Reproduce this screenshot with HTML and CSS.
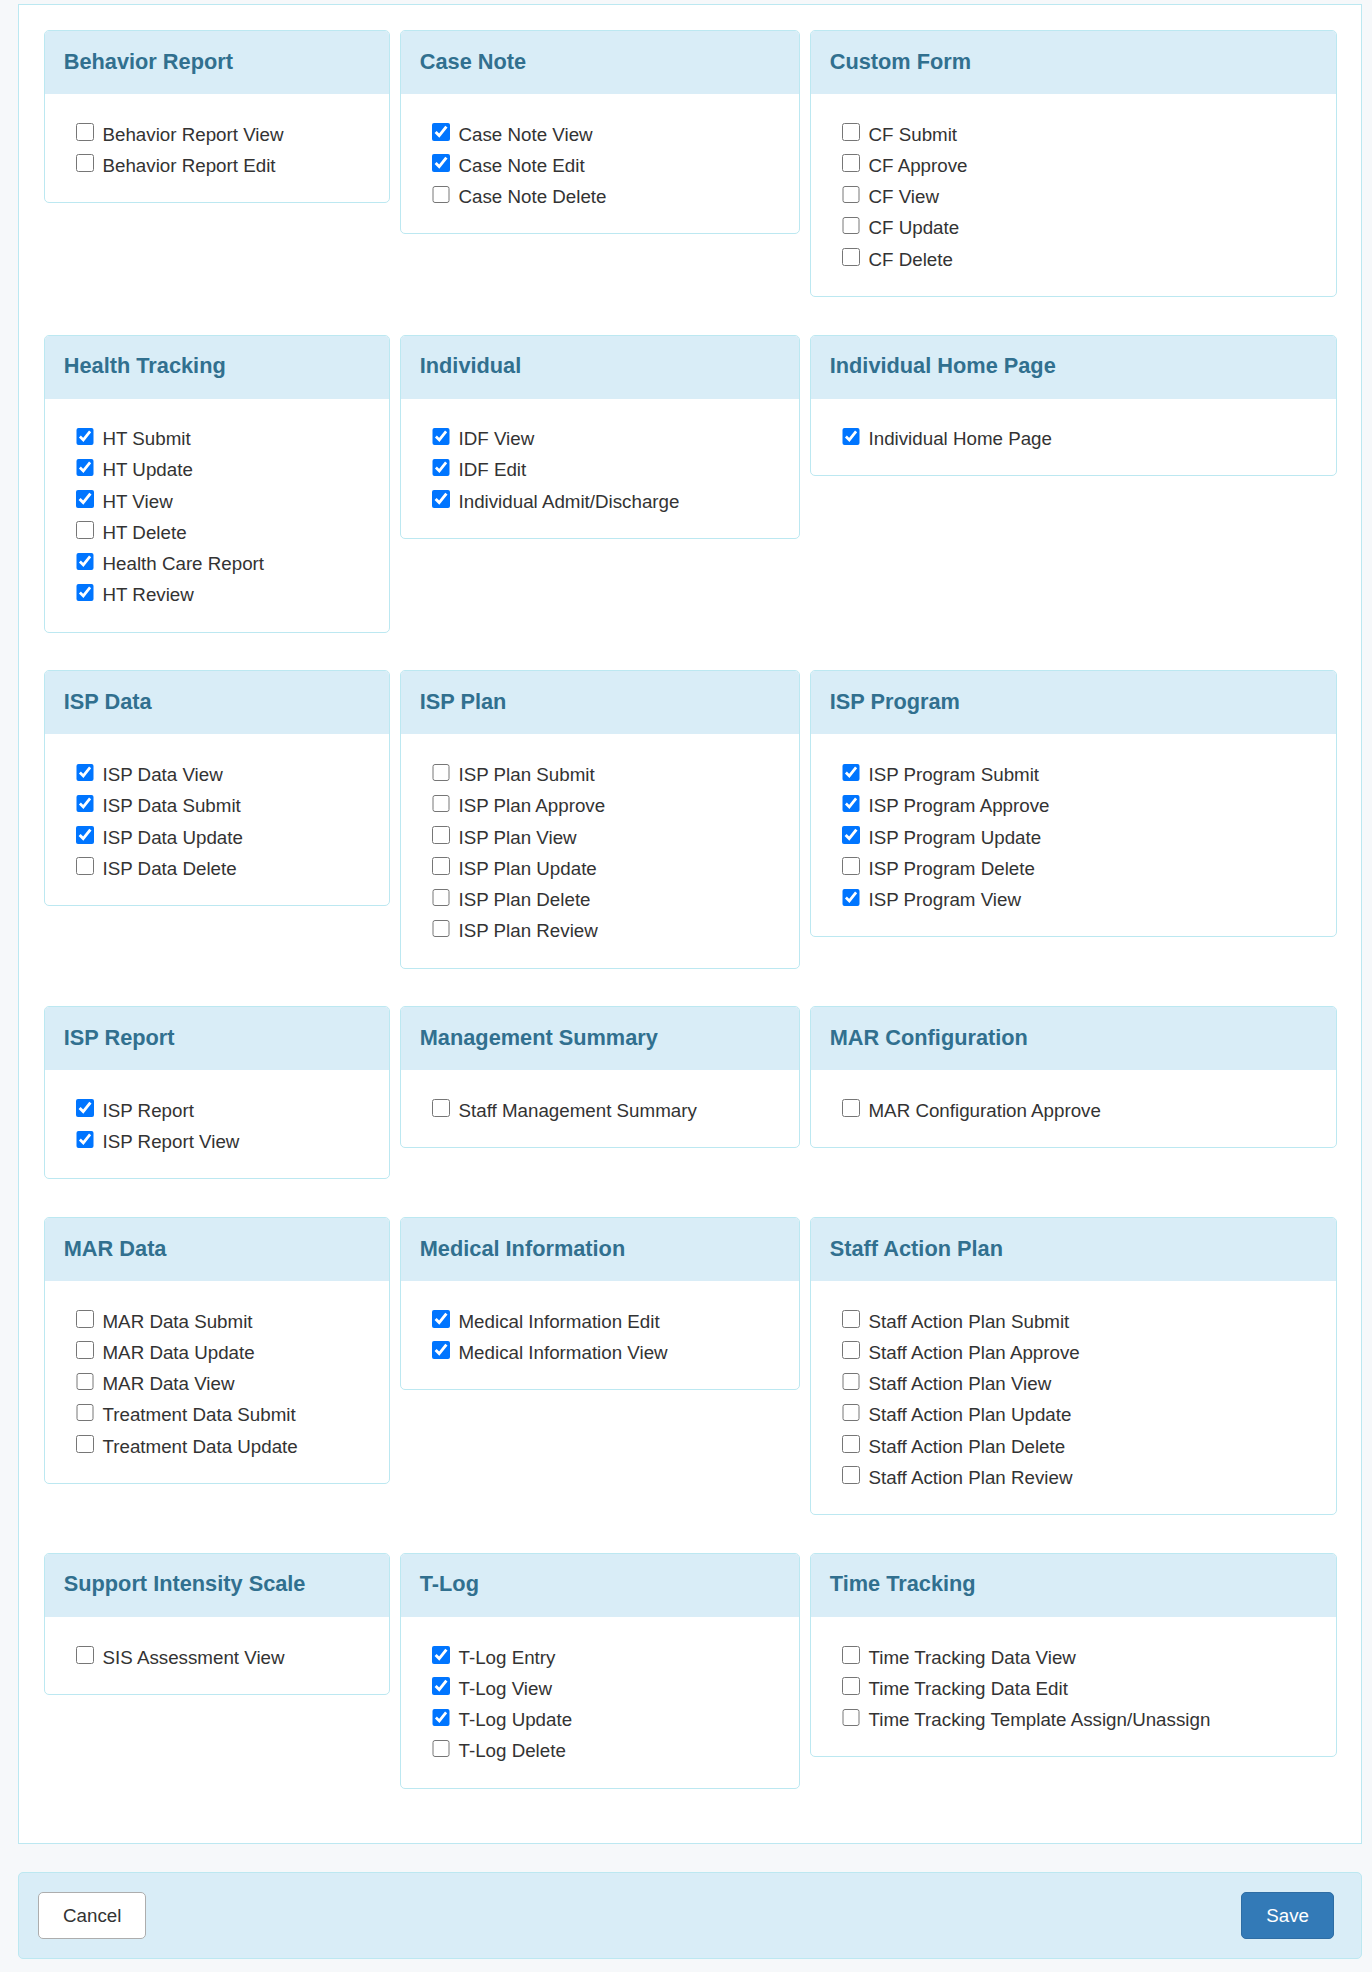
FILE: index.html
```html
<!DOCTYPE html>
<html lang="en">
<head>
<meta charset="utf-8">
<title>Permissions</title>
<link rel="stylesheet" href="styles.css">
</head>
<body>
<div class="page">
  <div class="perm-box">
    <div class="perm-grid">

      <section class="card">
        <header class="card-head"><h3>Behavior Report</h3></header>
        <div class="card-body">
          <label class="item"><input type="checkbox"><span>Behavior Report View</span></label>
          <label class="item"><input type="checkbox"><span>Behavior Report Edit</span></label>
        </div>
      </section>

      <section class="card">
        <header class="card-head"><h3>Case Note</h3></header>
        <div class="card-body">
          <label class="item"><input type="checkbox" checked><span>Case Note View</span></label>
          <label class="item"><input type="checkbox" checked><span>Case Note Edit</span></label>
          <label class="item"><input type="checkbox"><span>Case Note Delete</span></label>
        </div>
      </section>

      <section class="card">
        <header class="card-head"><h3>Custom Form</h3></header>
        <div class="card-body">
          <label class="item"><input type="checkbox"><span>CF Submit</span></label>
          <label class="item"><input type="checkbox"><span>CF Approve</span></label>
          <label class="item"><input type="checkbox"><span>CF View</span></label>
          <label class="item"><input type="checkbox"><span>CF Update</span></label>
          <label class="item"><input type="checkbox"><span>CF Delete</span></label>
        </div>
      </section>

      <section class="card">
        <header class="card-head"><h3>Health Tracking</h3></header>
        <div class="card-body">
          <label class="item"><input type="checkbox" checked><span>HT Submit</span></label>
          <label class="item"><input type="checkbox" checked><span>HT Update</span></label>
          <label class="item"><input type="checkbox" checked><span>HT View</span></label>
          <label class="item"><input type="checkbox"><span>HT Delete</span></label>
          <label class="item"><input type="checkbox" checked><span>Health Care Report</span></label>
          <label class="item"><input type="checkbox" checked><span>HT Review</span></label>
        </div>
      </section>

      <section class="card">
        <header class="card-head"><h3>Individual</h3></header>
        <div class="card-body">
          <label class="item"><input type="checkbox" checked><span>IDF View</span></label>
          <label class="item"><input type="checkbox" checked><span>IDF Edit</span></label>
          <label class="item"><input type="checkbox" checked><span>Individual Admit/Discharge</span></label>
        </div>
      </section>

      <section class="card">
        <header class="card-head"><h3>Individual Home Page</h3></header>
        <div class="card-body">
          <label class="item"><input type="checkbox" checked><span>Individual Home Page</span></label>
        </div>
      </section>

      <section class="card">
        <header class="card-head"><h3>ISP Data</h3></header>
        <div class="card-body">
          <label class="item"><input type="checkbox" checked><span>ISP Data View</span></label>
          <label class="item"><input type="checkbox" checked><span>ISP Data Submit</span></label>
          <label class="item"><input type="checkbox" checked><span>ISP Data Update</span></label>
          <label class="item"><input type="checkbox"><span>ISP Data Delete</span></label>
        </div>
      </section>

      <section class="card">
        <header class="card-head"><h3>ISP Plan</h3></header>
        <div class="card-body">
          <label class="item"><input type="checkbox"><span>ISP Plan Submit</span></label>
          <label class="item"><input type="checkbox"><span>ISP Plan Approve</span></label>
          <label class="item"><input type="checkbox"><span>ISP Plan View</span></label>
          <label class="item"><input type="checkbox"><span>ISP Plan Update</span></label>
          <label class="item"><input type="checkbox"><span>ISP Plan Delete</span></label>
          <label class="item"><input type="checkbox"><span>ISP Plan Review</span></label>
        </div>
      </section>

      <section class="card">
        <header class="card-head"><h3>ISP Program</h3></header>
        <div class="card-body">
          <label class="item"><input type="checkbox" checked><span>ISP Program Submit</span></label>
          <label class="item"><input type="checkbox" checked><span>ISP Program Approve</span></label>
          <label class="item"><input type="checkbox" checked><span>ISP Program Update</span></label>
          <label class="item"><input type="checkbox"><span>ISP Program Delete</span></label>
          <label class="item"><input type="checkbox" checked><span>ISP Program View</span></label>
        </div>
      </section>

      <section class="card">
        <header class="card-head"><h3>ISP Report</h3></header>
        <div class="card-body">
          <label class="item"><input type="checkbox" checked><span>ISP Report</span></label>
          <label class="item"><input type="checkbox" checked><span>ISP Report View</span></label>
        </div>
      </section>

      <section class="card">
        <header class="card-head"><h3>Management Summary</h3></header>
        <div class="card-body">
          <label class="item"><input type="checkbox"><span>Staff Management Summary</span></label>
        </div>
      </section>

      <section class="card">
        <header class="card-head"><h3>MAR Configuration</h3></header>
        <div class="card-body">
          <label class="item"><input type="checkbox"><span>MAR Configuration Approve</span></label>
        </div>
      </section>

      <section class="card">
        <header class="card-head"><h3>MAR Data</h3></header>
        <div class="card-body">
          <label class="item"><input type="checkbox"><span>MAR Data Submit</span></label>
          <label class="item"><input type="checkbox"><span>MAR Data Update</span></label>
          <label class="item"><input type="checkbox"><span>MAR Data View</span></label>
          <label class="item"><input type="checkbox"><span>Treatment Data Submit</span></label>
          <label class="item"><input type="checkbox"><span>Treatment Data Update</span></label>
        </div>
      </section>

      <section class="card">
        <header class="card-head"><h3>Medical Information</h3></header>
        <div class="card-body">
          <label class="item"><input type="checkbox" checked><span>Medical Information Edit</span></label>
          <label class="item"><input type="checkbox" checked><span>Medical Information View</span></label>
        </div>
      </section>

      <section class="card">
        <header class="card-head"><h3>Staff Action Plan</h3></header>
        <div class="card-body">
          <label class="item"><input type="checkbox"><span>Staff Action Plan Submit</span></label>
          <label class="item"><input type="checkbox"><span>Staff Action Plan Approve</span></label>
          <label class="item"><input type="checkbox"><span>Staff Action Plan View</span></label>
          <label class="item"><input type="checkbox"><span>Staff Action Plan Update</span></label>
          <label class="item"><input type="checkbox"><span>Staff Action Plan Delete</span></label>
          <label class="item"><input type="checkbox"><span>Staff Action Plan Review</span></label>
        </div>
      </section>

      <section class="card">
        <header class="card-head"><h3>Support Intensity Scale</h3></header>
        <div class="card-body">
          <label class="item"><input type="checkbox"><span>SIS Assessment View</span></label>
        </div>
      </section>

      <section class="card">
        <header class="card-head"><h3>T-Log</h3></header>
        <div class="card-body">
          <label class="item"><input type="checkbox" checked><span>T-Log Entry</span></label>
          <label class="item"><input type="checkbox" checked><span>T-Log View</span></label>
          <label class="item"><input type="checkbox" checked><span>T-Log Update</span></label>
          <label class="item"><input type="checkbox"><span>T-Log Delete</span></label>
        </div>
      </section>

      <section class="card">
        <header class="card-head"><h3>Time Tracking</h3></header>
        <div class="card-body">
          <label class="item"><input type="checkbox"><span>Time Tracking Data View</span></label>
          <label class="item"><input type="checkbox"><span>Time Tracking Data Edit</span></label>
          <label class="item"><input type="checkbox"><span>Time Tracking Template Assign/Unassign</span></label>
        </div>
      </section>

    </div>
  </div>

  <div class="actions">
    <button type="button" class="btn btn-cancel">Cancel</button>
    <button type="button" class="btn btn-save">Save</button>
  </div>
</div>
</body>
</html>
```

FILE: styles.css
```css
html, body {
  margin: 0;
  padding: 0;
  background: #f6f8fa;
}

body {
  font-family: "Liberation Sans", Arial, sans-serif;
  font-size: 18.75px;
  color: #333;
}

.page {
  padding: 4px 10px 0 18px;
}

.perm-box {
  background: #fff;
  border: 1px solid #bce8f1;
  padding: 25px 24px 54px 25px;
}

.perm-grid {
  display: grid;
  grid-template-columns: 346px 400px 1fr;
  column-gap: 10px;
  row-gap: 37.75px;
  align-items: start;
}

.card {
  border: 1px solid #bce8f1;
  border-radius: 5px;
  overflow: hidden;
  background: #fff;
}

.card-head {
  height: 63px;
  box-sizing: border-box;
  background: #d9edf7;
  display: flex;
  align-items: center;
  padding: 0 18.75px 2px;
}

.card-head h3 {
  margin: 0;
  font-size: 21.75px;
  font-weight: bold;
  color: #31708f;
}

.card-body {
  padding: 24.6px 18.75px 21px;
  display: flex;
  flex-direction: column;
}

.item {
  display: flex;
  align-items: flex-start;
  line-height: 31.25px;
  color: #333;
}

.item input {
  width: 17.5px;
  height: 17.5px;
  margin: 4.5px 9px 0 12.25px;
  flex: none;
}

.actions {
  margin-top: 28px;
  background: #d9edf7;
  border: 1px solid #bce8f1;
  border-radius: 5px;
  padding: 19px 27px 19px 19px;
  display: flex;
  justify-content: space-between;
  align-items: center;
}

.btn {
  font-family: "Liberation Sans", Arial, sans-serif;
  font-size: 18.75px;
  height: 47px;
  padding: 0 24px;
  border-radius: 5px;
  border: 1px solid;
  line-height: 45px;
}

.btn-cancel {
  background: #fff;
  border-color: #adadad;
  color: #333;
}

.btn-save {
  background: #337ab7;
  border-color: #2e6da4;
  color: #fff;
}
```
